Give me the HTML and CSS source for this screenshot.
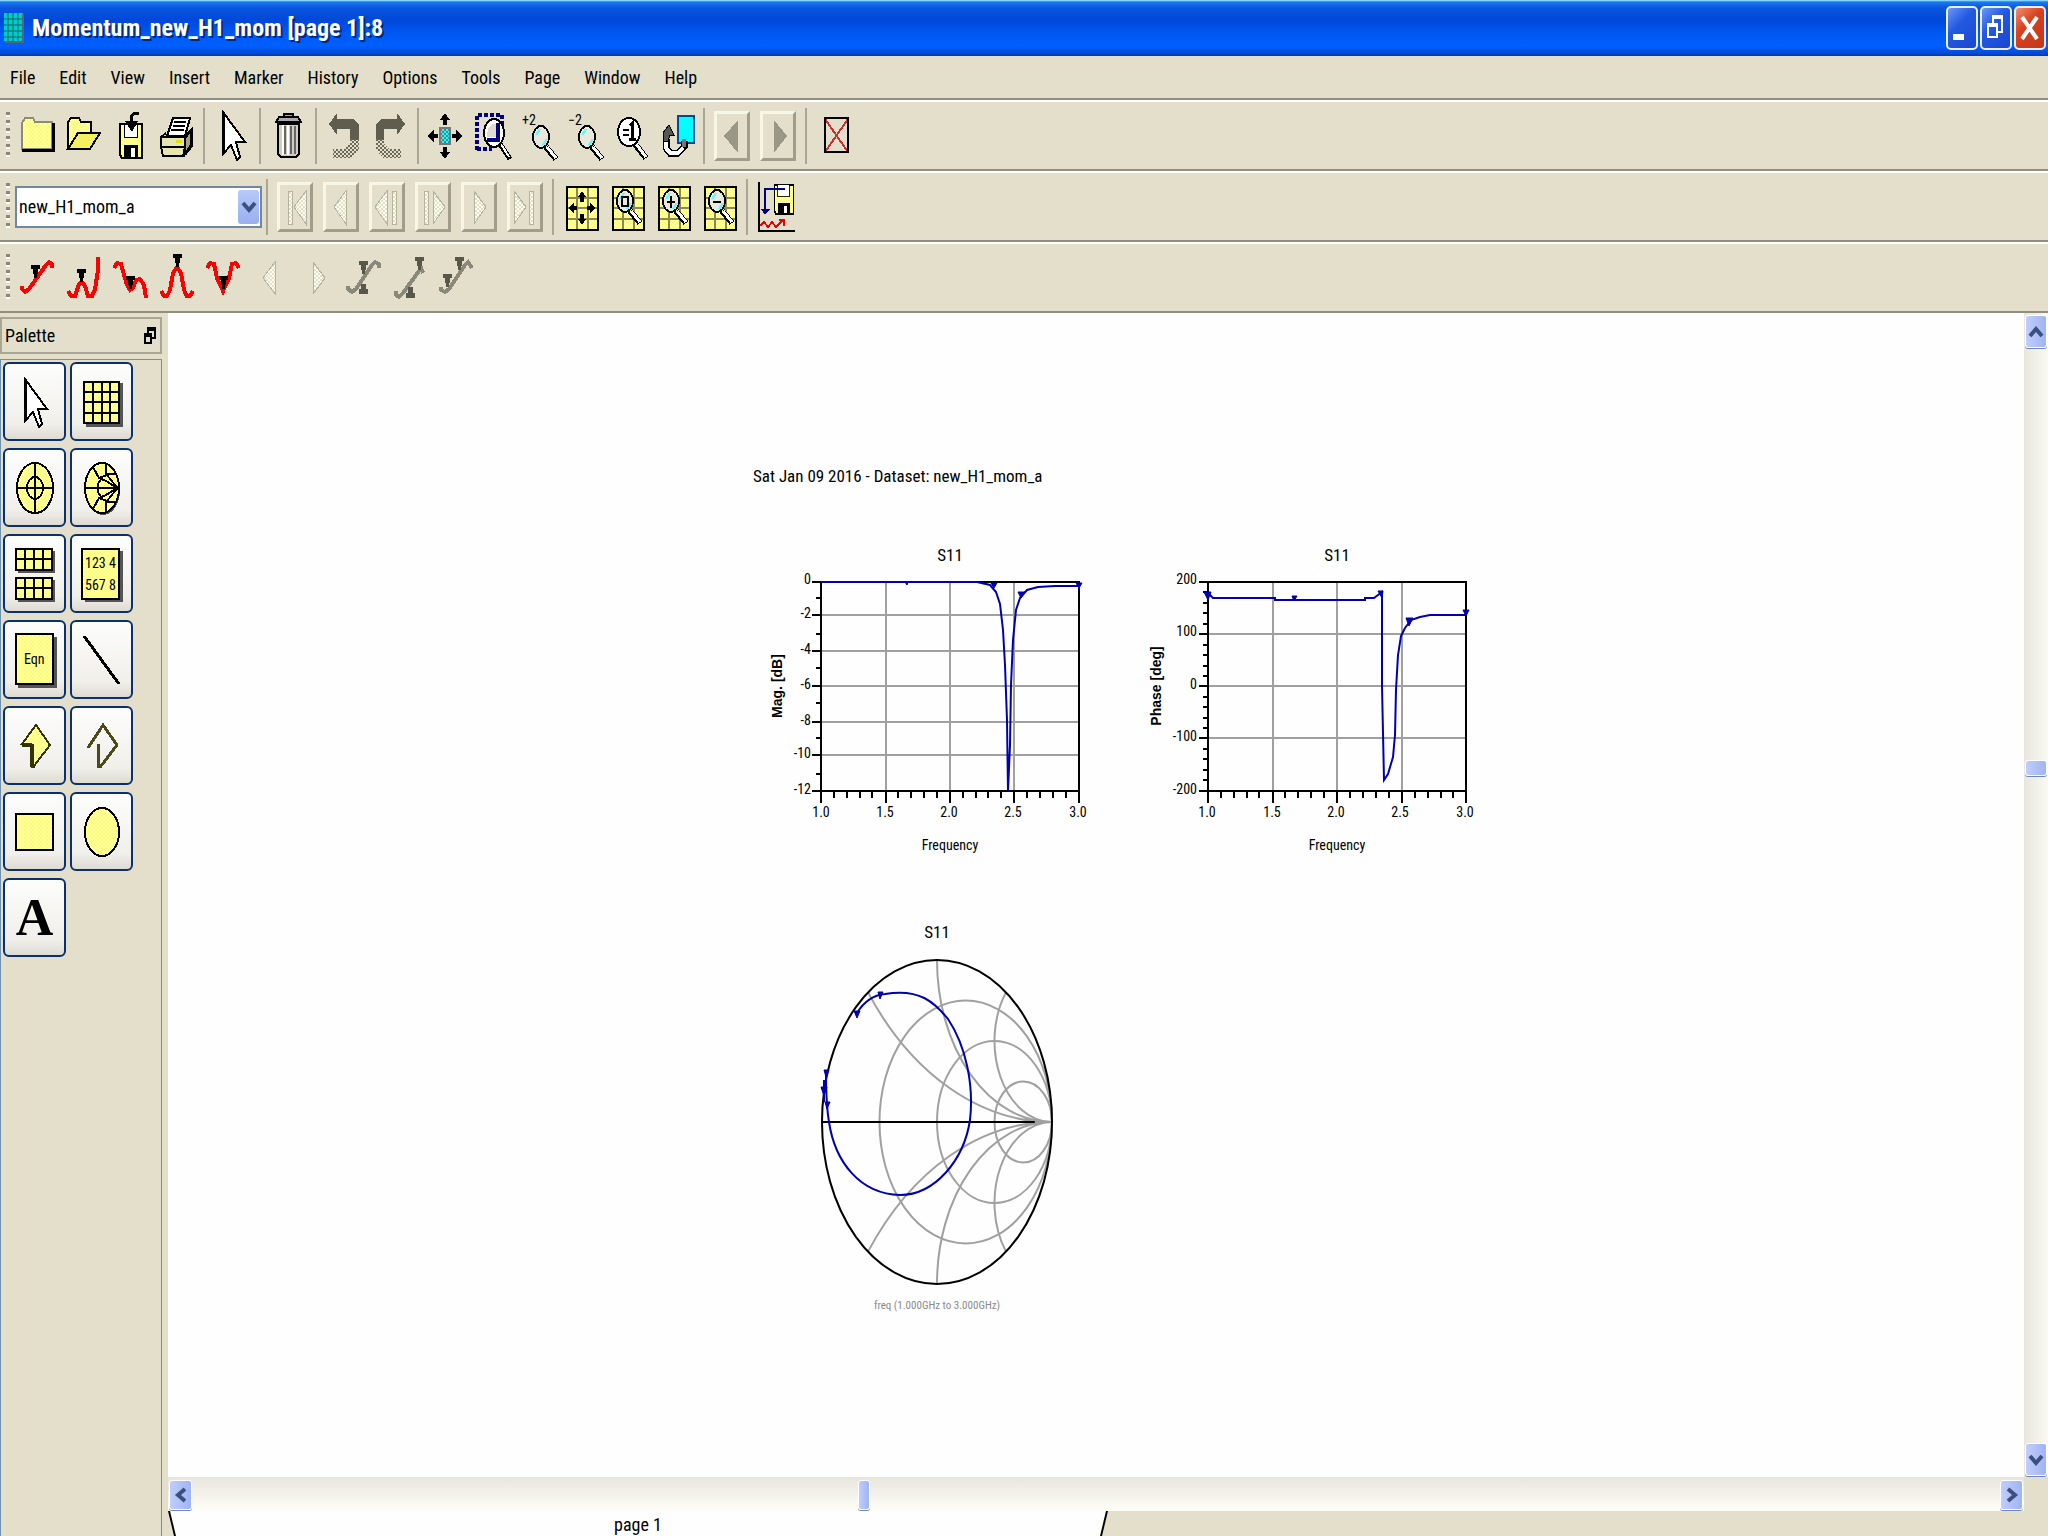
FILE: index.html
```
<!DOCTYPE html>
<html lang="en">
<head>
    <meta charset="UTF-8">
    <meta name="viewport" content="width=device-width, initial-scale=1.0">
    <title>Momentum_new_H1_mom [page 1]:8</title>
    <link rel="stylesheet" href="styles.css">
</head>
<body>
    <!-- shared fills and symbols -->
    <svg class="defs" aria-hidden="true">
        <defs>
            <pattern id="yellow" width="4" height="4" patternUnits="userSpaceOnUse">
                <rect width="4" height="4" fill="#ffff66"/>
                <rect width="2" height="2" fill="#ffffb4"/>
                <rect x="2" y="2" width="2" height="2" fill="#ffffb4"/>
            </pattern>
            <pattern id="dither" width="4" height="4" patternUnits="userSpaceOnUse">
                <rect width="2" height="2" fill="#6b6a58"/>
                <rect x="2" y="2" width="2" height="2" fill="#6b6a58"/>
            </pattern>
            <pattern id="pale" width="4" height="4" patternUnits="userSpaceOnUse">
                <rect width="4" height="4" fill="#e3dfcb"/>
                <rect width="2" height="2" fill="#fffff0"/>
                <rect x="2" y="2" width="2" height="2" fill="#fffff0"/>
            </pattern>
            <pattern id="teal" width="4" height="4" patternUnits="userSpaceOnUse">
                <rect width="4" height="4" fill="#00a8a8"/>
                <rect width="2" height="2" fill="#5ce0e0"/>
                <rect x="2" y="2" width="2" height="2" fill="#5ce0e0"/>
            </pattern>
        </defs>
        <symbol id="lens" viewBox="0 0 26 36" overflow="visible">
            <path d="M14 22L24 34" stroke="#000" stroke-width="6"/>
            <path d="M15 22L24 33" stroke="#fff" stroke-width="3"/>
            <ellipse cx="9" cy="12" rx="8" ry="11" fill="#e9e8dc" stroke="#000" stroke-width="2"/>
            <path d="M4 10L8 4M11 20L15 14" stroke="#5ff" stroke-width="2"/>
        </symbol>
        <symbol id="marker" viewBox="0 0 9 13" overflow="visible">
            <path d="M0 0H9V4H7V9H6V13H3V9H2V4H0Z"/>
        </symbol>
        <symbol id="cursor" viewBox="0 0 24 50" overflow="visible">
            <path d="M1 1L23 31H14L18 46L15 49L9 34L1 43Z" fill="#fff" stroke="#000" stroke-width="2"/>
            <path d="M1 1V43" stroke="#000" stroke-width="3"/>
        </symbol>
        <symbol id="yellow-grid" viewBox="0 0 33 46" overflow="visible">
            <rect x="1" y="1" width="31" height="43" fill="url(#yellow)"/>
            <path d="M11 1V44M22 1V44M1 12H32M1 22H32M1 33H32" stroke="#8a8858" stroke-width="2"/>
            <rect x="1" y="1" width="31" height="43" fill="none" stroke="#000" stroke-width="2"/>
        </symbol>
        <symbol id="arrows" viewBox="0 0 34 46" overflow="visible">
            <path d="M17 0L22 7H19V12H15V7H12ZM17 46L22 39H19V34H15V39H12ZM0 23L6 16V21H10V25H6V30ZM34 23L28 16V21H24V25H28V30Z"/>
        </symbol>
        <symbol id="floppy" viewBox="0 0 24 36" overflow="visible">
            <path d="M1 1H23V35H3L1 32Z" fill="url(#yellow)" stroke="#000" stroke-width="2"/>
            <rect x="5" y="1" width="13" height="13" fill="#fff" stroke="#000"/>
            <rect x="5" y="22" width="14" height="13" fill="#000"/>
            <rect x="12" y="25" width="4" height="9" fill="#fff"/>
        </symbol>
        <symbol id="chevron" viewBox="0 0 16 14" overflow="visible">
            <path d="M2 3L8 10L14 3" fill="none" stroke="#3c5080" stroke-width="4"/>
        </symbol>
    </svg>

    <header class="titlebar">
        <svg class="app-icon" viewBox="0 0 20 30">
            <rect width="19" height="28" fill="#0cc"/>
            <path d="M4 0V28M9 0V28M14 0V28M0 6H19M0 12H19M0 18H19M0 24H19" stroke="#066" stroke-width="1"/>
            <path d="M19 1V29H1" fill="none" stroke="#567" stroke-width="2"/>
        </svg>
        <h1>Momentum_new_H1_mom [page 1]:8</h1>
        <div class="window-buttons">
            <button type="button" aria-label="Minimize"><svg viewBox="0 0 32 44"><path d="M7 28H18V34H7Z" fill="#fff"/></svg></button>
            <button type="button" aria-label="Restore"><svg viewBox="0 0 32 44"><path d="M13 17V11H22V26H18M8 19H17V31H8Z" fill="none" stroke="#fff" stroke-width="2"/><path d="M12 11H23M7 19H18" stroke="#fff" stroke-width="4"/></svg></button>
            <button class="close" type="button" aria-label="Close"><svg viewBox="0 0 32 44"><path d="M8 11L23 33M23 11L8 33" stroke="#fff" stroke-width="4"/></svg></button>
        </div>
    </header>

    <nav class="menubar">
        <a href="#">File</a>
        <a href="#">Edit</a>
        <a href="#">View</a>
        <a href="#">Insert</a>
        <a href="#">Marker</a>
        <a href="#">History</a>
        <a href="#">Options</a>
        <a href="#">Tools</a>
        <a href="#">Page</a>
        <a href="#">Window</a>
        <a href="#">Help</a>
    </nav>

    <div class="toolbar">
        <span class="grip"></span>
        <button class="tool" type="button" aria-label="New"><svg viewBox="0 0 36 50">
            <path d="M2 12L5 7H13L15 11H32V38H2Z" fill="url(#yellow)" stroke="#8a8a78" stroke-width="2"/>
            <path d="M33 12V39H2" fill="none" stroke="#000" stroke-width="3"/>
        </svg></button>
        <button class="tool" type="button" aria-label="Open"><svg viewBox="0 0 36 50">
            <path d="M2 37V11L5 7H13L15 11H25V22" fill="url(#yellow)" stroke="#000" stroke-width="2"/>
            <path d="M2 38L12 22H34L24 38Z" fill="#f4f060" stroke="#000" stroke-width="2"/>
        </svg></button>
        <button class="tool" type="button" aria-label="Save"><svg viewBox="0 0 36 50">
            <use href="#floppy" x="7" y="12" width="24" height="36"/>
            <path d="M27 2H22L19 6V12" fill="none" stroke="#000" stroke-width="3"/>
            <path d="M13 10H26L20 21Z"/>
        </svg></button>
        <button class="tool" type="button" aria-label="Print"><svg viewBox="0 0 36 50">
            <path d="M9 25L15 7H32L27 25Z" fill="#fff" stroke="#000" stroke-width="2"/>
            <path d="M16 11H28M15 15H27M13 19H26" stroke="#000" stroke-width="2"/>
            <path d="M3 26L8 22M28 24L34 18V35L27 44" fill="none" stroke="#000" stroke-width="2"/>
            <path d="M3 26H27V36H3ZM3 36H27L25 45H5Z" fill="#e8e6b0" stroke="#000" stroke-width="2"/>
            <path d="M27 27L33 20V34L27 43Z" fill="#a5a284" stroke="#000" stroke-width="2"/>
            <path d="M18 30H24" stroke="#e8e000" stroke-width="3"/>
        </svg></button>
        <span class="sep"></span>
        <button class="tool" type="button" aria-label="Select"><svg viewBox="0 0 36 50"><use href="#cursor" x="8" width="24" height="50"/></svg></button>
        <span class="sep"></span>
        <button class="tool" type="button" aria-label="Delete"><svg viewBox="0 0 36 50">
            <path d="M8 13H29V43L26 46H11L8 43Z" fill="#cfcdbe" stroke="#000" stroke-width="2"/>
            <path d="M13 14V44M18 14V44" stroke="#fff" stroke-width="2"/>
            <path d="M15 15V43M21 15V43M25 15V43" stroke="#666" stroke-width="2"/>
            <path d="M14 6V3H23V6M6 11L9 6H28L31 11Z" fill="#aaa" stroke="#000" stroke-width="2"/>
        </svg></button>
        <span class="sep"></span>
        <button class="tool" type="button" aria-label="Undo"><svg viewBox="0 0 36 50">
            <path d="M3 13L11 2V8H28L33 14V29H24V18H11V24Z" fill="#5f5e4e"/>
            <path d="M24 28H33V38L26 47H7V38H19L24 32Z" fill="url(#dither)"/>
        </svg></button>
        <button class="tool" type="button" aria-label="Redo"><svg viewBox="0 0 36 50">
            <path d="M33 13L25 2V8H9L4 14V29H12V18H25V24Z" fill="#5f5e4e"/>
            <path d="M12 28H4V38L11 47H29V38H17L12 32Z" fill="url(#dither)"/>
        </svg></button>
        <span class="sep"></span>
        <button class="tool" type="button" aria-label="View all"><svg viewBox="0 0 36 50">
            <use href="#arrows" y="2" width="34" height="46"/>
            <rect x="12" y="17" width="10" height="16" fill="url(#teal)" stroke="#777" stroke-width="2"/>
        </svg></button>
        <button class="tool" type="button" aria-label="Zoom area"><svg viewBox="0 0 36 50">
            <path d="M3 39V4H28V14M3 38H18" fill="none" stroke="#000080" stroke-width="4" stroke-dasharray="4 2"/>
            <path d="M26 33L36 48" stroke="#000" stroke-width="5"/>
            <path d="M27 33L35 46" stroke="#fff" stroke-width="2"/>
            <ellipse cx="20" cy="22" rx="10" ry="14" fill="#fff" stroke="#000" stroke-width="2"/>
            <path d="M24 12V29H13" fill="none" stroke="#000080" stroke-width="4"/>
            <path d="M14 17L18 13H22V26H13Z" fill="#dddccf"/>
        </svg></button>
        <button class="tool" type="button" aria-label="Zoom in 2x"><svg viewBox="0 0 36 50">
            <text class="icon-text" x="2" y="14">+2</text>
            <use href="#lens" x="12" y="14" width="26" height="36"/>
        </svg></button>
        <button class="tool" type="button" aria-label="Zoom out 2x"><svg viewBox="0 0 36 50">
            <text class="icon-text" x="2" y="14">−2</text>
            <use href="#lens" x="12" y="14" width="26" height="36"/>
        </svg></button>
        <button class="tool" type="button" aria-label="Actual size"><svg viewBox="0 0 36 50">
            <path d="M23 33L34 47" stroke="#000" stroke-width="6"/>
            <path d="M24 33L34 46" stroke="#fff" stroke-width="3"/>
            <ellipse cx="17" cy="21" rx="11" ry="14" fill="#fff" stroke="#000" stroke-width="2"/>
            <path d="M11 19H17M11 24H17" stroke="#000" stroke-width="2"/>
            <path d="M18 15L20 13V28M17 28H24" fill="none" stroke="#000" stroke-width="3"/>
        </svg></button>
        <button class="tool" type="button" aria-label="Redraw"><svg viewBox="0 0 36 50">
            <rect x="20" y="5" width="16" height="27" fill="#0ff" stroke="#004a9c" stroke-width="2"/>
            <path d="M8 28V37L12 42H20L26 36V30" fill="none" stroke="#000" stroke-width="7"/>
            <path d="M8 30V37L12 42H20L25 37" fill="none" stroke="#fff" stroke-width="4"/>
            <path d="M26 28V36" stroke="#777" stroke-width="4"/>
            <path d="M5 30V22L11 14L16 24H12L10 30Z" fill="#555" stroke="#000"/>
        </svg></button>
        <span class="sep"></span>
        <button class="tool raised" type="button" aria-label="Back"><svg viewBox="0 0 36 50"><path d="M10 25L24 9V42Z" fill="#9a9786"/></svg></button>
        <button class="tool raised" type="button" aria-label="Forward"><svg viewBox="0 0 36 50"><path d="M27 25L14 9V42Z" fill="#9a9786"/></svg></button>
        <span class="sep"></span>
        <button class="tool" type="button" aria-label="Close page"><svg viewBox="0 0 36 50">
            <path d="M9 8L32 41M32 8L9 41" stroke="#c83232" stroke-width="2"/>
            <rect x="9" y="7" width="23" height="34" fill="none" stroke="#000" stroke-width="2"/>
        </svg></button>
    </div>

    <div class="toolbar">
        <span class="grip"></span>
        <div class="dataset">
            <select aria-label="Dataset">
                <option>new_H1_mom_a</option>
            </select>
            <span class="drop"><svg viewBox="0 0 16 14"><use href="#chevron" width="16" height="14"/></svg></span>
        </div>
        <span class="sep"></span>
        <button class="tool raised off" type="button" aria-label="First"><svg viewBox="0 0 36 50"><path d="M11 9H15V42H11ZM17 25L29 9V42Z"/></svg></button>
        <button class="tool raised off" type="button" aria-label="Previous"><svg viewBox="0 0 36 50"><path d="M11 25L23 9V42Z"/></svg></button>
        <button class="tool raised off" type="button" aria-label="Step back"><svg viewBox="0 0 36 50"><path d="M6 25L18 9V42ZM23 9H27V42H23Z"/></svg></button>
        <button class="tool raised off" type="button" aria-label="Step forward"><svg viewBox="0 0 36 50"><path d="M9 9H13V42H9ZM30 25L18 9V42Z"/></svg></button>
        <button class="tool raised off" type="button" aria-label="Next"><svg viewBox="0 0 36 50"><path d="M25 25L13 9V42Z"/></svg></button>
        <button class="tool raised off" type="button" aria-label="Last"><svg viewBox="0 0 36 50"><path d="M19 25L7 9V42ZM22 9H26V42H22Z"/></svg></button>
        <span class="sep"></span>
        <button class="tool" type="button" aria-label="Fit plot"><svg viewBox="0 0 36 50">
            <use href="#yellow-grid" x="3" y="4" width="33" height="46"/>
            <path d="M19 9L23 15H21V20H17V15H15ZM19 43L23 37H21V32H17V37H15ZM6 26L11 20V24H14V28H11V32ZM32 26L27 20V24H24V28H27V32Z"/>
        </svg></button>
        <button class="tool" type="button" aria-label="Zoom plot"><svg viewBox="0 0 36 50">
            <use href="#yellow-grid" x="3" y="4" width="33" height="46"/>
            <use href="#lens" x="7" y="7" width="26" height="36"/>
            <rect x="13" y="15" width="6" height="9" fill="none" stroke="#000" stroke-width="2"/>
        </svg></button>
        <button class="tool" type="button" aria-label="Zoom in plot"><svg viewBox="0 0 36 50">
            <use href="#yellow-grid" x="3" y="4" width="33" height="46"/>
            <use href="#lens" x="7" y="7" width="26" height="36"/>
            <path d="M12 20H20M16 14V26" stroke="#000" stroke-width="2"/>
        </svg></button>
        <button class="tool" type="button" aria-label="Zoom out plot"><svg viewBox="0 0 36 50">
            <use href="#yellow-grid" x="3" y="4" width="33" height="46"/>
            <use href="#lens" x="7" y="7" width="26" height="36"/>
            <path d="M12 20H20" stroke="#000" stroke-width="2"/>
        </svg></button>
        <span class="sep"></span>
        <button class="tool" type="button" aria-label="Save trace"><svg viewBox="0 0 36 50">
            <path d="M2 0V49H38" fill="none" stroke="#000" stroke-width="2"/>
            <use href="#floppy" x="16" y="2" width="22" height="31"/>
            <path d="M28 7H8V30" fill="none" stroke="#000080" stroke-width="2"/>
            <path d="M4 27H13L8 33Z" fill="#000080"/>
            <path d="M3 44L7 40L11 45L15 40L19 45L26 38M22 38H27V44" fill="none" stroke="#e00" stroke-width="2"/>
        </svg></button>
    </div>

    <div class="toolbar">
        <span class="grip"></span>
        <button class="tool" type="button" aria-label="Marker"><svg viewBox="0 0 36 50">
            <path class="trace" d="M2 33V36L5 39L9 36L26 12L29 9L32 11V15"/>
            <use href="#marker" x="11" y="12" width="9" height="13"/>
        </svg></button>
        <button class="tool" type="button" aria-label="Peak marker"><svg viewBox="0 0 36 50">
            <path class="trace" d="M2 38L5 43H9L13 31L16 29L19 33L22 43H26L29 36L32 17V4"/>
            <use href="#marker" x="11" y="16" width="9" height="13"/>
        </svg></button>
        <button class="tool" type="button" aria-label="Valley marker"><svg viewBox="0 0 36 50">
            <path class="trace" d="M2 15L5 10L9 11L12 22L15 32L18 37L21 35L24 27L28 26L32 32L34 45"/>
            <use href="#marker" x="14" y="23" width="9" height="13"/>
        </svg></button>
        <button class="tool" type="button" aria-label="Maximum marker"><svg viewBox="0 0 36 50">
            <path class="trace" d="M3 38L6 43H9L12 37L15 20L19 14L23 20L26 37L29 43H32L35 38"/>
            <use href="#marker" x="15" y="1" width="9" height="13"/>
        </svg></button>
        <button class="tool" type="button" aria-label="Minimum marker"><svg viewBox="0 0 36 50">
            <path class="trace" d="M3 15L6 10L10 11L13 25L19 38L25 25L28 11L32 10L35 15"/>
            <use href="#marker" x="15" y="23" width="9" height="13"/>
        </svg></button>
        <button class="tool off" type="button" aria-label="Previous marker"><svg viewBox="0 0 36 50"><path d="M13 25L25 9V41Z"/></svg></button>
        <button class="tool off" type="button" aria-label="Next marker"><svg viewBox="0 0 36 50"><path d="M29 25L17 9V41Z"/></svg></button>
        <button class="tool muted" type="button" aria-label="Delta marker"><svg viewBox="0 0 36 50">
            <path class="trace" d="M6 33V36L10 39L14 36L30 12L33 9L37 11V15"/>
            <use href="#marker" x="17" y="8" width="9" height="13"/>
            <path d="M17 41H26V36H24V31H19V36H17Z"/>
        </svg></button>
        <button class="tool muted" type="button" aria-label="Marker line"><svg viewBox="0 0 36 50">
            <path class="trace" d="M8 38V42L11 44L15 40L31 18L33 15L35 20"/>
            <use href="#marker" x="27" y="4" width="9" height="13"/>
            <path d="M18 45H27V40H25V34H20V40H18Z"/>
        </svg></button>
        <button class="tool muted" type="button" aria-label="Marker pair"><svg viewBox="0 0 36 50">
            <path class="trace" d="M7 34V37L11 39L15 36L31 12L34 9L38 15"/>
            <use href="#marker" x="21" y="4" width="9" height="13"/>
            <use href="#marker" x="9" y="21" width="9" height="13"/>
        </svg></button>
    </div>

    <main class="workspace">
        <aside class="palette">
            <div class="palette-head">
                <h2>Palette</h2>
                <button type="button" aria-label="Float palette"><svg viewBox="0 0 14 20"><path d="M5 7V3H12V12H9M2 10H8V17H2Z" fill="none" stroke="#000" stroke-width="2"/><path d="M4 3H13M1 9H9" stroke="#000" stroke-width="4"/></svg></button>
            </div>
            <div class="palette-grid">
                <button type="button" aria-label="Pointer"><svg viewBox="0 0 42 54"><use href="#cursor" x="10" y="3" width="24" height="50"/></svg></button>
                <button type="button" aria-label="Rectangular plot"><svg viewBox="0 0 42 54">
                    <path d="M5 50H40V8" fill="none" stroke="#555" stroke-width="3"/>
                    <path d="M3 7H38V48H3ZM12 7V48M21 7V48M29 7V48M3 17H38M3 27H38M3 38H38" fill="url(#yellow)" stroke="#000" stroke-width="2"/>
                </svg></button>
                <button type="button" aria-label="Polar plot"><svg viewBox="0 0 42 54">
                    <ellipse cx="21" cy="27" rx="18" ry="25" fill="url(#yellow)" stroke="#000" stroke-width="2"/>
                    <ellipse cx="21" cy="27" rx="8" ry="11" fill="none" stroke="#000" stroke-width="2"/>
                    <path d="M21 2V52M3 27H39" stroke="#000" stroke-width="2"/>
                </svg></button>
                <button type="button" aria-label="Smith chart"><svg viewBox="0 0 42 54">
                    <ellipse cx="22" cy="29" rx="17" ry="25" fill="#555"/>
                    <ellipse cx="21" cy="27" rx="17" ry="25" fill="url(#yellow)" stroke="#000" stroke-width="2"/>
                    <path d="M4 27H38M12 6L18 17L26 14L34 24L38 27M12 48L18 37L26 40L34 30L38 27M18 17L25 20L36 27M18 37L25 34L36 27M25 3V13H35M25 51V41H35M22 15L17 23V31L22 39" fill="none" stroke="#000" stroke-width="2"/>
                    <path d="M33 27L39 23V31Z"/>
                </svg></button>
                <button type="button" aria-label="Stacked plot"><svg viewBox="0 0 42 54">
                    <path d="M4 25H40V4M4 54H40V33" fill="none" stroke="#555" stroke-width="2"/>
                    <path d="M2 2H38V23H2ZM11 2V23M20 2V23M29 2V23M2 12H38M2 31H38V52H2ZM11 31V52M20 31V52M29 31V52M2 41H38" fill="url(#yellow)" stroke="#000" stroke-width="2"/>
                </svg></button>
                <button type="button" aria-label="List"><svg viewBox="0 0 42 54">
                    <path d="M4 53H40V4" fill="none" stroke="#555" stroke-width="3"/>
                    <rect x="1" y="2" width="37" height="50" fill="url(#yellow)" stroke="#000" stroke-width="2"/>
                    <text class="icon-text" x="4" y="21">123 4</text>
                    <text class="icon-text" x="4" y="43">567 8</text>
                </svg></button>
                <button type="button" aria-label="Equation"><svg viewBox="0 0 42 54">
                    <path d="M4 53H41V4" fill="none" stroke="#555" stroke-width="3"/>
                    <rect x="2" y="1" width="37" height="50" fill="url(#yellow)" stroke="#000" stroke-width="2"/>
                    <text class="icon-text" x="10" y="31">Eqn</text>
                </svg></button>
                <button type="button" aria-label="Line"><svg viewBox="0 0 42 54"><path d="M3 3L38 51" stroke="#000" stroke-width="3"/></svg></button>
                <button type="button" aria-label="Polygon"><svg viewBox="0 0 42 54">
                    <path d="M22 6L36 26L20 47H17V25H8Z" fill="url(#yellow)" stroke="#33330a" stroke-width="2"/>
                    <path d="M8 26H18V47H21" fill="none" stroke="#33330a" stroke-width="3"/>
                </svg></button>
                <button type="button" aria-label="Polyline"><svg viewBox="0 0 42 54"><path d="M7 29L22 6L36 26L20 47H17V25" fill="none" stroke="#4a4a1a" stroke-width="3"/></svg></button>
                <button type="button" aria-label="Rectangle"><svg viewBox="0 0 42 54"><rect x="2" y="9" width="37" height="36" fill="url(#yellow)" stroke="#000" stroke-width="2"/></svg></button>
                <button type="button" aria-label="Circle"><svg viewBox="0 0 42 54"><ellipse cx="21" cy="27" rx="17" ry="24" fill="url(#yellow)" stroke="#000" stroke-width="2"/></svg></button>
                <button class="letter" type="button" aria-label="Text">A</button>
            </div>
        </aside>

        <section class="viewer">
            <div class="canvas">
                <div class="sheet">
                    <p class="sheet-title">Sat Jan 09 2016 - Dataset: new_H1_mom_a</p>
                    <div class="plots">
                        <svg class="plot" viewBox="753 540 347 324">
                            <text class="plot-title" x="950" y="561">S11</text>
                            <path class="gridline" d="M886 582V791M950 582V791M1014 582V791M821 615H1079M821 651H1079M821 686H1079M821 722H1079M821 755H1079"/>
                            <path class="axis" d="M812 582H1079V799M812 791H1079M821 582V803M812 615H821M812 651H821M812 686H821M812 722H821M812 755H821"/>
                            <path class="axis" d="M816 598H821M816 634H821M816 668H821M816 703H821M816 738H821M816 774H821M834 791V798M847 791V798M860 791V798M872 791V798M886 791V803M898 791V798M911 791V798M924 791V798M937 791V798M950 791V803M963 791V798M976 791V798M988 791V798M1001 791V798M1014 791V803M1027 791V798M1040 791V798M1053 791V798M1066 791V798M1079 791V803"/>
                            <path class="curve" d="M821 582H977L990 585L996 592L1000 604L1003 630L1005 665L1007 720L1008 791L1010 745L1011 685L1013 640L1016 610L1020 598L1027 590L1038 587L1055 586H1079V589"/>
                            <path class="curve-mark" d="M991 583H997L994 588ZM1018 592H1025L1021 598ZM1076 583H1082L1079 588ZM905 582H908L907 585Z"/>
                            <g class="tick y">
                                <text x="811" y="584">0</text>
                                <text x="811" y="618">-2</text>
                                <text x="811" y="654">-4</text>
                                <text x="811" y="689">-6</text>
                                <text x="811" y="725">-8</text>
                                <text x="811" y="758">-10</text>
                                <text x="811" y="794">-12</text>
                            </g>
                            <g class="tick x">
                                <text x="821" y="817">1.0</text>
                                <text x="885" y="817">1.5</text>
                                <text x="949" y="817">2.0</text>
                                <text x="1013" y="817">2.5</text>
                                <text x="1078" y="817">3.0</text>
                            </g>
                            <text class="axis-name" x="950" y="850">Frequency</text>
                            <text class="axis-side" transform="translate(782 686) rotate(-90)">Mag. [dB]</text>
                        </svg>
                        <svg class="plot" viewBox="1140 540 347 324">
                            <text class="plot-title" x="1337" y="561">S11</text>
                            <path class="gridline" d="M1273 582V791M1337 582V791M1402 582V791M1208 634H1466M1208 686H1466M1208 738H1466"/>
                            <path class="axis" d="M1199 582H1466V803M1199 791H1466M1208 582V803M1199 634H1208M1199 686H1208M1199 738H1208"/>
                            <path class="axis" d="M1203 592H1208M1203 603H1208M1203 613H1208M1203 624H1208M1203 645H1208M1203 655H1208M1203 666H1208M1203 676H1208M1203 697H1208M1203 707H1208M1203 718H1208M1203 728H1208M1203 749H1208M1203 759H1208M1203 770H1208M1203 780H1208M1221 791V798M1234 791V798M1247 791V798M1259 791V798M1273 791V803M1285 791V798M1298 791V798M1311 791V798M1324 791V798M1337 791V803M1350 791V798M1363 791V798M1376 791V798M1389 791V798M1402 791V803M1415 791V798M1428 791V798M1441 791V798M1453 791V798"/>
                            <path class="curve" d="M1208 593L1213 598H1275V600H1365V598H1374L1378 595L1382 592V686L1384 780L1388 774L1393 757L1395 735L1396 690L1398 655L1401 636L1405 628L1411 620L1420 617L1430 615H1466"/>
                            <path class="curve-mark" d="M1204 592H1211L1208 600ZM1292 596H1297L1294 601ZM1378 591H1383L1382 598ZM1406 618H1413L1409 626ZM1463 610H1469L1466 616Z"/>
                            <g class="tick y">
                                <text x="1197" y="584">200</text>
                                <text x="1197" y="636">100</text>
                                <text x="1197" y="689">0</text>
                                <text x="1197" y="741">-100</text>
                                <text x="1197" y="794">-200</text>
                            </g>
                            <g class="tick x">
                                <text x="1207" y="817">1.0</text>
                                <text x="1272" y="817">1.5</text>
                                <text x="1336" y="817">2.0</text>
                                <text x="1400" y="817">2.5</text>
                                <text x="1465" y="817">3.0</text>
                            </g>
                            <text class="axis-name" x="1337" y="850">Frequency</text>
                            <text class="axis-side" transform="translate(1161 686) rotate(-90)">Phase [deg]</text>
                        </svg>
                        <svg class="smith" viewBox="753 918 347 400">
                            <text class="plot-title" x="937" y="938">S11</text>
                            <g transform="translate(937 1122) scale(115 -162)">
                                <circle class="gridline" cx=".25" cy="0" r=".75"/>
                                <circle class="gridline" cx=".5" cy="0" r=".5"/>
                                <circle class="gridline" cx=".75" cy="0" r=".25"/>
                                <path class="gridline" d="M-.6 .8A2 2 0 0 1 1 0M0 1A1 1 0 0 1 1 0M.6 .8A.5 .5 0 0 1 1 0M-.6 -.8A2 2 0 0 0 1 0M0 -1A1 1 0 0 0 1 0M.6 -.8A.5 .5 0 0 0 1 0"/>
                                <circle class="axis" cx="0" cy="0" r="1"/>
                                <path class="axis" d="M-1 0H.85"/>
                            </g>
                            <path class="curve" d="M857 1013C865 1000 874 995 885 994C920 988 935 1003 948 1019C966 1046 974 1085 970 1120C964 1160 935 1195 900 1195C860 1194 835 1162 829 1122C826 1104 826 1090 826 1071"/>
                            <path class="curve-mark" d="M854 1011H860L857 1018ZM878 992H883L880 999ZM824 1070H829L826 1077ZM821 1087H827L824 1096ZM825 1102H830L827 1109Z"/>
                            <path class="curve" d="M824 1080V1102"/>
                            <text class="caption" x="937" y="1309">freq (1.000GHz to 3.000GHz)</text>
                        </svg>
                    </div>
                </div>
            </div>
            <div class="vscroll">
                <button type="button" aria-label="Scroll up"><svg class="up" viewBox="0 0 16 14"><use href="#chevron" width="16" height="14"/></svg></button>
                <span class="thumb"></span>
                <button type="button" aria-label="Scroll down"><svg viewBox="0 0 16 14"><use href="#chevron" width="16" height="14"/></svg></button>
            </div>
            <div class="hscroll">
                <button type="button" aria-label="Scroll left"><svg class="left" viewBox="0 0 16 14"><use href="#chevron" width="16" height="14"/></svg></button>
                <span class="thumb"></span>
                <button type="button" aria-label="Scroll right"><svg class="right" viewBox="0 0 16 14"><use href="#chevron" width="16" height="14"/></svg></button>
            </div>
            <div class="tabs">
                <button class="tab" type="button">page 1</button>
            </div>
        </section>
    </main>
</body>
</html>
```
FILE: styles.css
```
* {
    box-sizing: border-box;
}
body {
    background-color: #E3DFCB;
    color: #000000;
    display: flex;
    flex-direction: column;
    font-family: "Roboto Condensed", Roboto, "Liberation Sans", sans-serif;
    font-size: 18px;
    height: 100vh;
    margin: 0;
    overflow: hidden;
}
button {
    background: none;
    border: 0;
    color: inherit;
    font: inherit;
    padding: 0;
}
svg {
    display: block;
    overflow: visible;
}
.defs {
    height: 0;
    position: absolute;
    width: 0;
}

/* title bar */
.titlebar {
    align-items: center;
    background: linear-gradient(#A8F4F8 0, #1A78F0 2px, #0A55E0 8px, #0048D8 20px, #0058F4 34px, #0060FF 46px, #0048D0 54px, #0038A8);
    color: #FFFFFF;
    display: flex;
    height: 56px;
    padding: 0 2px 0 4px;
}
.app-icon {
    height: 30px;
    width: 20px;
}
h1 {
    flex: 1;
    font-size: 24px;
    margin: 0;
    padding-left: 8px;
    text-shadow: 2px 2px #002A80;
}
.window-buttons {
    display: flex;
    gap: 2px;
}
.window-buttons button {
    background: linear-gradient(135deg, #6A98F8, #2458E0 40%, #1A48D0);
    border: 2px solid #E8F0FF;
    border-radius: 5px;
    height: 44px;
    width: 32px;
}
.window-buttons .close {
    background: linear-gradient(135deg, #F09070, #D84020 40%, #C03818);
}
.window-buttons svg {
    height: 44px;
    margin: -2px;
    width: 32px;
}

/* menu */
.menubar {
    align-items: center;
    border-bottom: 2px solid #928D80;
    display: flex;
    gap: 24px;
    height: 44px;
    padding: 0 10px;
}
.menubar a {
    color: #000000;
    text-decoration: none;
}

/* toolbars */
.toolbar {
    align-items: center;
    border-bottom: 2px solid #928D80;
    border-top: 2px solid #FFFFFF;
    display: flex;
    height: 71px;
    padding-left: 6px;
}
.grip {
    background: repeating-linear-gradient(#8A8779 0, #8A8779 3px, #FFFFFF 3px, #FFFFFF 5px, transparent 5px, transparent 8px);
    height: 48px;
    margin-right: 5px;
    width: 4px;
}
.tool {
    flex: none;
    height: 50px;
    width: 36px;
    margin: 0 5px;
}
.tool svg {
    height: 50px;
    shape-rendering: crispEdges;
    width: 36px;
}
.raised {
    border: 3px solid;
    border-color: #F8F6E4 #A09D8A #A09D8A #F8F6E4;
}
.raised svg {
    margin: -3px;
}
.off path {
    fill: url(#pale);
    stroke: #B5B29E;
    stroke-width: 1px;
}
.sep {
    background-color: #A9A694;
    flex: none;
    height: 56px;
    margin: 0 4px;
    width: 2px;
}
.trace {
    fill: none;
    stroke: #FF0000;
    stroke-width: 4px;
}
.muted svg {
    fill: #58574A;
}
.muted .trace {
    stroke: #8A8878;
}
.icon-text {
    font-size: 14px;
}
.dataset {
    height: 42px;
    position: relative;
    width: 247px;
}
select {
    appearance: none;
    background-color: #FFFFFF;
    border: 2px solid #7088A8;
    border-radius: 0;
    color: #000000;
    font: inherit;
    height: 100%;
    padding: 0 2px;
    width: 100%;
}
.drop {
    align-items: center;
    background: linear-gradient(#B8C8FA, #98B0F0);
    border-radius: 3px;
    display: flex;
    height: 34px;
    justify-content: center;
    pointer-events: none;
    position: absolute;
    right: 3px;
    top: 4px;
    width: 21px;
}
.drop svg, .vscroll svg, .hscroll svg {
    height: 14px;
    width: 16px;
}

/* workspace */
.workspace {
    display: flex;
    flex: 1;
    min-height: 0;
}
.palette {
    display: flex;
    flex-direction: column;
    padding: 4px 6px 0 0;
    width: 168px;
}
.palette-head {
    align-items: center;
    border: 2px solid #A9A694;
    display: flex;
    height: 37px;
    justify-content: space-between;
    margin-bottom: 5px;
    padding: 0 3px;
}
h2 {
    font-size: 18px;
    font-weight: normal;
    margin: 0;
}
.palette-head svg {
    height: 20px;
    width: 14px;
}
.palette-grid {
    align-content: start;
    border: 1px solid #7090B0;
    border-bottom: 0;
    display: grid;
    flex: 1;
    gap: 7px 4px;
    grid-template-columns: 63px 63px;
    padding: 2px;
}
.palette-grid button {
    align-items: center;
    background: linear-gradient(#FDFDFC, #F0EFEA 80%, #DEDBD2);
    border: 2px solid #0A3070;
    border-radius: 6px;
    display: flex;
    height: 79px;
    justify-content: center;
}
.palette-grid svg {
    height: 54px;
    shape-rendering: crispEdges;
    width: 42px;
}
.palette-grid .letter {
    font-family: "Liberation Serif", serif;
    font-size: 52px;
    font-weight: bold;
}

/* page viewer */
.viewer {
    display: grid;
    flex: 1;
    grid-template-columns: 1fr 24px;
    grid-template-rows: 1fr 34px 25px;
    min-width: 0;
}
.canvas {
    background-color: #FEFEFE;
    min-height: 0;
    overflow: hidden;
}
.sheet {
    padding: 150px 0 0 585px;
}
.sheet-title {
    font-size: 17px;
    line-height: 26px;
    margin: 0;
}
.plots {
    display: grid;
    gap: 54px 40px;
    grid-template-columns: 347px 347px;
    padding-top: 51px;
}
.plot {
    height: 324px;
    width: 347px;
}
.smith {
    height: 400px;
    width: 347px;
}
.plot-title {
    font-size: 17px;
    text-anchor: middle;
}
.tick {
    font-size: 14px;
}
.tick.y {
    text-anchor: end;
}
.tick.x {
    text-anchor: middle;
}
.axis-name {
    font-size: 14px;
    text-anchor: middle;
}
.axis-side {
    font-family: "Liberation Sans", sans-serif;
    font-size: 14px;
    font-weight: bold;
    text-anchor: middle;
}
.caption {
    fill: #8A8A8A;
    font-size: 11px;
    text-anchor: middle;
}
.gridline {
    fill: none;
    stroke: #A0A0A0;
    stroke-width: 2px;
    vector-effect: non-scaling-stroke;
}
.axis {
    fill: none;
    stroke: #000000;
    stroke-width: 2px;
    vector-effect: non-scaling-stroke;
}
.curve {
    fill: none;
    stroke: #0000B0;
    stroke-width: 2px;
}
.curve-mark {
    fill: #0000B0;
    stroke: #0000B0;
}

/* scrollbars */
.vscroll, .hscroll {
    display: flex;
    justify-content: space-between;
}
.vscroll {
    align-items: center;
    background: linear-gradient(90deg, #E8E6DC, #FAFAF4);
    flex-direction: column;
    padding: 2px 1px 1px;
}
.hscroll {
    align-items: stretch;
    background: linear-gradient(#E8E6DC, #FEFEF8);
    padding: 3px 1px 1px;
}
.vscroll button, .hscroll button, .thumb {
    align-items: center;
    background: linear-gradient(90deg, #C0CEFC, #A0B4F4);
    border: 1px solid #FFFFFF;
    border-radius: 3px;
    box-shadow: 0 1px #7088C0;
    display: flex;
    justify-content: center;
}
.vscroll button {
    height: 33px;
    width: 22px;
}
.hscroll button {
    width: 23px;
}
.vscroll .thumb {
    height: 16px;
    margin-top: -256px;
    width: 22px;
}
.hscroll .thumb {
    margin-left: -464px;
    width: 12px;
}
.up {
    transform: rotate(180deg);
}
.left {
    transform: rotate(90deg);
}
.right {
    transform: rotate(-90deg);
}

/* page tabs */
.tabs {
    grid-column: 1 / -1;
    overflow: hidden;
}
.tab {
    background-color: #000000;
    clip-path: polygon(0 0, 100% 0, calc(100% - 6px) 100%, 6px 100%);
    height: 25px;
    isolation: isolate;
    line-height: 22px;
    padding-top: 3px;
    position: relative;
    width: 940px;
}
.tab::before {
    background-color: #FEFEFE;
    clip-path: polygon(0 0, 100% 0, calc(100% - 6px) 100%, 6px 100%);
    content: "";
    inset: 0 2px;
    position: absolute;
    z-index: -1;
}
```
